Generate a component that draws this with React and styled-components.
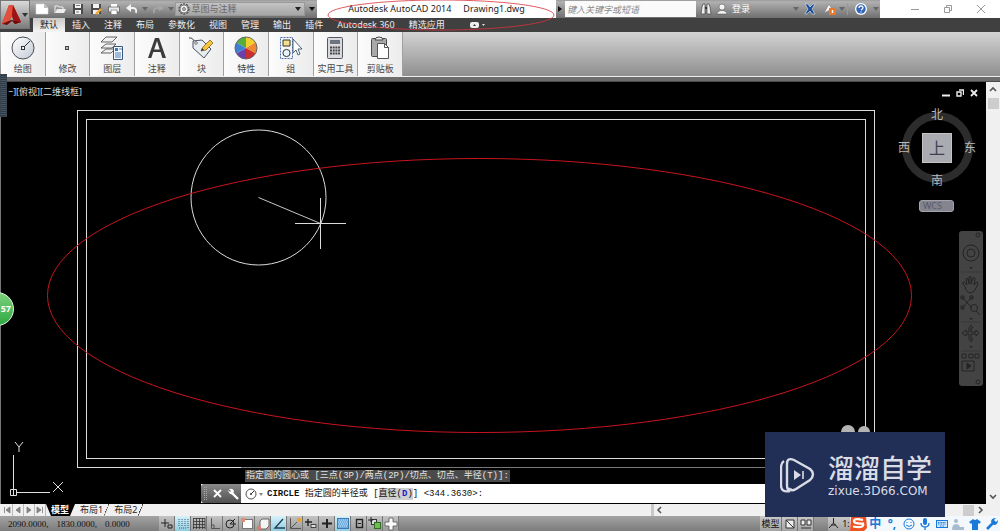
import React from "react";
import styled, { createGlobalStyle, css } from "styled-components";

const GlobalStyle = createGlobalStyle`
  *, *::before {
    box-sizing: border-box;
  }
  body {
    margin: 0;
    background: #000;
    font-family: "Noto Sans", "Noto Sans CJK SC", sans-serif;
    font-size: 9px;
    line-height: 12px;
  }
  button, select, input {
    font: inherit;
    color: inherit;
    margin: 0;
    padding: 0;
    border: 0;
    background: none;
  }
  button {
    display: flex;
    align-items: center;
    justify-content: center;
  }
  h1, p {
    margin: 0;
    font: inherit;
  }
  svg {
    display: block;
    flex: none;
  }
`;

/* ---------- small drawings ---------- */

const Svg = ({ w = 16, h = w, children }) => (
  <svg width={w} height={h} viewBox={`0 0 ${w} ${h}`} fill="none" aria-hidden="true">
    {children}
  </svg>
);

const Caret = ({ color = "#333" }) => (
  <Svg w={6} h={4}>
    <path d="M0 0h6L3 4z" fill={color} />
  </Svg>
);

const quickIcons = {
  新建: (
    <Svg w={14} h={12}>
      <path d="M1 1h8l4 4v6H1z" fill="#fff" stroke="#ddd" strokeWidth=".6" />
      <path d="M9 1v4h4z" fill="#bbb" />
    </Svg>
  ),
  打开: (
    <Svg w={12}>
      <path d="M1 10V3h3l1 1h4v2" stroke="#eee" />
      <path d="M1 10l2-4h9l-2 4z" fill="#eee" />
    </Svg>
  ),
  保存: (
    <Svg w={12}>
      <path d="M1 1h10v10H1z" fill="#4b4b4b" />
      <path d="M3 1h6v4H3zM3 7h6v4H3z" fill="#f2f2f2" />
      <path d="M4 2.500h4M4 9h3" stroke="#777" />
    </Svg>
  ),
  另存为: (
    <Svg w={12}>
      <path d="M1 1h10v10H1z" fill="#4b4b4b" />
      <path d="M3 1h6v4H3zM3 7h6v4H3z" fill="#f2f2f2" />
      <path d="M6 11l5-5" stroke="#f0a830" strokeWidth="2.400" />
    </Svg>
  ),
  打印: (
    <Svg w={12}>
      <path d="M3 1h6v3H3z" fill="#fff" />
      <path d="M.5 4h11v5H.5z" fill="#e8e8e8" stroke="#444" strokeWidth=".6" />
      <path d="M3 7h6v4.500H3z" fill="#fff" stroke="#666" strokeWidth=".6" />
    </Svg>
  ),
  放弃: (
    <Svg w={12}>
      <path d="M3 5h4q4 0 3 5" stroke="#f4f4f4" strokeWidth="1.800" />
      <path d="M0 5l5-4v8z" fill="#f4f4f4" />
    </Svg>
  ),
};

const RedoIcon = () => (
  <Svg w={12}>
    <path d="M9 5H5Q1 5 2 10" stroke="#a8a8a8" strokeWidth="1.600" />
    <path d="M12 5L7 2v6z" fill="#a8a8a8" />
  </Svg>
);

const GearIcon = () => (
  <Svg w={12}>
    <circle cx="6" cy="6" r="5" stroke="#555" strokeWidth="1.400" strokeDasharray="2 1.140" />
    <circle cx="6" cy="6" r="4" fill="#eee" stroke="#666" strokeWidth=".8" />
    <circle cx="6" cy="6" r="1.500" fill="#bbb" stroke="#666" strokeWidth=".8" />
  </Svg>
);

const ribbonPanels = [
  {
    name: "绘图",
    icon: (
      <Svg w={26}>
        <defs>
          <linearGradient id="disc" x1="0" y1="0" x2="1" y2="1">
            <stop stopColor="#fff" />
            <stop offset="1" stopColor="#c3cad6" />
          </linearGradient>
        </defs>
        <circle cx="13" cy="13" r="11" fill="url(#disc)" stroke="#4a4d52" />
        <path d="M14 12l6-6" stroke="#333" />
        <rect x="11.500" y="11.500" width="3" height="3" fill="#eef" stroke="#333" />
      </Svg>
    ),
  },
  {
    name: "修改",
    icon: (
      <Svg w={26}>
        <rect x="11.500" y="11.500" width="3" height="3" fill="#bbb" stroke="#444" />
      </Svg>
    ),
  },
  {
    name: "图层",
    icon: (
      <Svg w={26}>
        <path d="M2 18l5-4h9l-4 4zM2 13l5-4h10l-4 4zM2 7l5-5h11l-5 5z" fill="#f1f1f1" stroke="#555" strokeWidth=".9" />
        <path d="M14.500 11.500h9v13h-9z" fill="#f2f7fd" stroke="#39577c" />
        <path d="M16 13h3v3h-3z" fill="#3f78b8" />
        <path d="M20 14h3M16 18h6M16 20h6M16 22h6" stroke="#4f7eb1" />
      </Svg>
    ),
  },
  {
    name: "注释",
    icon: (
      <Svg w={26}>
        <path d="M4 23L11 3h4l7 20h-3.600l-1.900-6h-7.200l-2 6zM10.200 14.500h5.500L13 6z" fill="#3b3b3b" fillRule="evenodd" />
      </Svg>
    ),
  },
  {
    name: "块",
    icon: (
      <Svg w={26}>
        <path d="M1 3q4-1 6 5" stroke="#444" />
        <path d="M5 6l9-1 9 9-7 9L5 13z" fill="#e7ebf2" stroke="#4a5160" />
        <circle cx="8" cy="8" r="1.300" fill="#fff" stroke="#444" strokeWidth=".7" />
        <path d="M13 16l2-4 7-7 3 3-7 7z" fill="#f6c53b" stroke="#83601c" strokeWidth=".8" />
        <path d="M13 16l1-3 2 2z" fill="#333" />
      </Svg>
    ),
  },
  {
    name: "特性",
    icon: (
      <Svg w={26}>
        <path d="M13 13V2a11 11 0 0 1 9.500 5.500z" fill="#f2d02c" />
        <path d="M13 13l9.500-5.500a11 11 0 0 1 0 11z" fill="#ef8630" />
        <path d="M13 13l9.500 5.500A11 11 0 0 1 13 24z" fill="#c7302c" />
        <path d="M13 13v11a11 11 0 0 1-9.500-5.500z" fill="#6b3fae" />
        <path d="M13 13l-9.500 5.500a11 11 0 0 1 0-11z" fill="#3f7fd0" />
        <path d="M13 13L3.500 7.500A11 11 0 0 1 13 2z" fill="#58ad3e" />
        <circle cx="13" cy="13" r="11" stroke="#5c5c66" strokeWidth=".9" />
      </Svg>
    ),
  },
  {
    name: "组",
    icon: (
      <Svg w={26}>
        <path d="M2.500 2.500h12v21h-12z" stroke="#4b6fb0" strokeDasharray="2 1" />
        <path d="M5 5h7v6H5z" fill="#f2e08a" stroke="#333" />
        <circle cx="8.500" cy="18" r="3.600" fill="#e6f1fb" stroke="#333" />
        <path d="M15 4v14l3-3 2 5 2-1-2-5h4z" fill="#fff" stroke="#3c5666" strokeWidth=".9" />
      </Svg>
    ),
  },
  {
    name: "实用工具",
    icon: (
      <Svg w={26}>
        <rect x="5.500" y="2.500" width="15" height="21" rx="1" fill="#d8dade" stroke="#55585e" />
        <path d="M8 5h10v4H8z" fill="#6c7480" />
        <path d="M8 12.500h10M8 15.500h10M8 18.500h10" stroke="#444" strokeWidth="2" strokeDasharray="2 .7" />
      </Svg>
    ),
  },
  {
    name: "剪贴板",
    icon: (
      <Svg w={26}>
        <rect x="4.500" y="3.500" width="15" height="18" rx="1" fill="#a9a9a9" stroke="#4b4b4b" />
        <path d="M8 5q0-3 4-3t4 3z" fill="#eee" stroke="#444" />
        <path d="M10.500 8.500h7l4 4v11h-11z" fill="#fdfdfd" stroke="#555" />
        <path d="M17.500 8.500v4h4" stroke="#555" />
      </Svg>
    ),
  },
];

const dark = "#222";
const toggles = [
  { name: "推断约束", icon: <path d="M5 2v8M1 6h8M8 8h4v3H8z" stroke={dark} /> },
  { name: "捕捉模式", on: true, icon: <path d="M3 2v8M6 2v8M9 2v8M3 11h8M12 2v10" stroke="#345d78" strokeDasharray="1 1" /> },
  { name: "栅格显示", icon: <path d="M1 1.500h12M1 4.500h12M1 7.500h12M1 10.500h12M1.500 1v11M4.500 1v11M7.500 1v11M10.500 1v11M13 1v11" stroke="#333" strokeWidth=".8" /> },
  { name: "正交模式", icon: <path d="M3.500 1v10.500H12M3 8h3v3" stroke="#555" /> },
  { name: "极轴追踪", icon: <><circle cx="6" cy="7" r="4" stroke={dark} /><path d="M6 7l5-5M6 7h6" stroke={dark} /></> },
  { name: "对象捕捉", icon: <><rect x="2.500" y="2.500" width="10" height="9" fill="#fff" stroke="#777" /><path d="M1 1h4v4H1z" fill="#df8e74" /></> },
  { name: "三维对象捕捉", icon: <><path d="M4 4l2-2h7v7l-3 3H4z" fill="#f4f4f4" stroke="#666" /><circle cx="3" cy="11" r="2" fill="#e07b5c" /></> },
  { name: "对象捕捉追踪", on: true, icon: <path d="M11 2l-8 9h10" stroke="#1d4256" strokeWidth="1.400" /> },
  { name: "动态UCS", icon: <><path d="M2.500 1v10.500H13M3 11l6-6" stroke="#555" /><path d="M9 1h4v4H9z" fill="#e6a634" /></> },
  { name: "动态输入", icon: <><path d="M4 2v7M1 5h7" stroke={dark} strokeWidth="1.400" /><path d="M7 7.500h5v3H7z" fill="#ddd" stroke={dark} strokeWidth=".8" /></> },
  { name: "线宽", icon: <path d="M7 2v9M2 6.500h10" stroke={dark} strokeWidth="2" /> },
  { name: "透明度", on: true, icon: <><rect x="1.500" y="1.500" width="11" height="10" fill="#6eaede" stroke="#3f78ad" /><path d="M3 3h9M2 5h9M3 7h9M2 9h9" stroke="#c9e6fa" strokeDasharray="1 1" /></> },
  { name: "快捷特性", icon: <><rect x="4.500" y="2.500" width="6" height="8" stroke={dark} strokeWidth="1.400" /><path d="M6 6.500h3" stroke={dark} /></> },
  { name: "选择循环", icon: <><rect x="3.500" y="2.500" width="5" height="5" fill="#ddd" stroke="#333" /><rect x="6.500" y="5.500" width="6" height="6" fill="#6fbd4f" stroke="#2f6d25" /><path d="M3 0v5M0 3h5" stroke="#222" /></> },
  { name: "注释监视器", icon: <path d="M5 1h4v4h4v4H9v4H5V9H1V5h4z" fill="#fafafa" stroke="#555" strokeWidth=".8" /> },
];

/* ---------- page ---------- */

const Page = styled.div`
  position: relative;
`;

const Window = styled.div`
  display: flex;
  flex-direction: column;
  min-height: 100vh;
`;

const Header = styled.header`
  display: grid;
  grid-template-columns: 30px 1fr;
  background: #404040;
`;

const AppButton = styled.button`
  height: 29px;
  gap: 1px;
  border: 1px solid #777;
  background: linear-gradient(#d9d9d9, #7d7d7d);
`;

const TitleBar = styled.div`
  display: flex;
  height: 18px;
`;

const bar = css`
  display: flex;
  align-items: center;
  background: linear-gradient(#9a9a9a, #b0b0b0 10%, #6f6f6f);
`;

const QuickAccess = styled.div`
  ${bar}
  width: 287px;
  padding-left: 3px;
`;

const ToolButton = styled.button`
  width: ${(p) => p.$w || 18}px;
  height: 16px;
`;

const SelectBox = styled.label`
  display: flex;
  align-items: center;
  width: 131px;
  height: 14px;
  margin: 0 2px 0 auto;
  padding: 0 3px 0 2px;
  gap: 2px;
  color: #6a6a6a;
  border: 1px solid #999;
  background: linear-gradient(#c4c4c4, #a5a5a5);
  select {
    flex: 1;
    appearance: none;
    outline: 0;
    height: 12px;
  }
`;

const Title = styled.h1`
  position: relative;
  flex: 1;
  display: flex;
  align-items: center;
  justify-content: center;
  gap: 12px;
  white-space: nowrap;
  color: #222;
  background: #fff;
`;

const TitleRing = styled.svg`
  position: absolute;
  left: 10px;
  top: -2px;
  z-index: 2;
`;

const InfoCenter = styled.div`
  ${bar}
  width: 324px;
  color: #fff;
`;

const SearchInput = styled.input`
  width: 131px;
  height: 16px;
  padding-left: 2px;
  background: #fafafa;
  outline: 0;
  &::placeholder {
    color: #888;
    font-style: italic;
    opacity: 1;
  }
`;

const LoginButton = styled.button`
  gap: 4px;
  margin-right: auto;
`;

const Divider = styled.i`
  width: 1px;
  height: 12px;
  margin: 0 2px;
  background: #999;
`;

const WindowControls = styled.div`
  display: flex;
  align-items: center;
  justify-content: flex-end;
  width: 120px;
  padding-right: 2px;
  background: #fff;
`;

const Tabs = styled.nav`
  display: flex;
  height: 14px;
  padding-left: 3px;
`;

const Tab = styled.button`
  padding: 0 7px;
  height: 14px;
  white-space: nowrap;
  color: ${(p) => (p.$active ? "#222" : "#eee")};
  ${(p) => p.$active && "background: linear-gradient(#c9c9c9, #f5f5f5);"}
`;

const Ribbon = styled.section`
  height: 50px;
  padding-left: 1px;
  border-bottom: 1px solid #4a4a4a;
  background: linear-gradient(#d3d3d3, #8f8f8f 44px, #f0f0f0 44px, #f0f0f0 45px, #6d6d6d 45px);
`;

const PanelRow = styled.div`
  display: grid;
  grid-template-columns: repeat(9, 1fr);
  width: 402px;
`;

const PanelButton = styled.button`
  flex-direction: column;
  justify-content: flex-start;
  height: 44px;
  padding-top: 3px;
  gap: 2px;
  color: #444;
  border-right: 1px solid #a0a0a0;
  background: linear-gradient(90deg, #fcfcfc, #ececec);
  white-space: nowrap;
`;

const Workspace = styled.main`
  flex: 1;
  display: grid;
  grid-template-columns: 1fr 14px;
  min-height: 300px;
`;

const Canvas = styled.div`
  position: relative;
  display: flex;
  flex-direction: column;
  justify-content: space-between;
  border-left: 1px solid #777;
  background: #000;
`;

const Drawing = styled.svg`
  position: absolute;
  inset: 0;
  width: 100%;
  height: 100%;
`;

const ViewLabel = styled.p`
  padding: 4px 0 0 7px;
  color: #ddd;
`;

const DocumentControls = styled.div`
  position: absolute;
  right: 5px;
  top: 3px;
  display: flex;
`;

const DockHandle = styled.div`
  position: absolute;
  left: -1px;
  top: -8px;
  width: 7px;
  height: 43px;
  border: 1px solid #3a444e;
  background: repeating-linear-gradient(#2c3843, #2c3843 1px, #44586a 1px, #44586a 2px);
`;

const Badge = styled.div`
  position: absolute;
  left: -21px;
  top: 210px;
  width: 34px;
  height: 34px;
  padding-right: 2px;
  border: 1px solid #e6f5e6;
  border-radius: 50%;
  color: #fff;
  font-weight: bold;
  line-height: 32px;
  text-align: right;
  background: linear-gradient(#7ed27c, #2fa843);
`;

const ViewCube = styled.div`
  position: absolute;
  right: 9px;
  top: 26px;
  display: grid;
  grid-template-columns: 14px 52px 14px;
  grid-template-rows: 14px 52px 14px;
  place-items: center;
  color: #b8b8b8;
  font-size: 12px;
  &::before {
    content: "";
    position: absolute;
    left: 5px;
    top: 4px;
    width: 71px;
    height: 71px;
    border: 8px solid #2c2c2c;
    border-radius: 50%;
  }
  span, button {
    position: relative;
  }
`;

const CubeFace = styled.button`
  width: 30px;
  height: 30px;
  font-size: 16px;
  color: #3b4150;
  border: 1px solid #c4c4c4;
  background: #a9abb0;
`;

const WcsButton = styled.button`
  position: absolute;
  right: 32px;
  top: 118px;
  width: 35px;
  height: 12px;
  padding-left: 3px;
  justify-content: flex-start;
  border: 1px solid #a3a3ad;
  border-radius: 3px;
  color: #5a5a66;
  background: #84848f;
`;

const NavBar = styled.div`
  position: absolute;
  right: 3px;
  top: 149px;
  width: 24px;
  border-radius: 3px;
  background: #434343;
`;

const UcsIcon = styled.svg`
  position: absolute;
  left: 7px;
  bottom: 5px;
`;

const CommandArea = styled.div`
  position: relative;
  width: 600px;
  margin-left: 200px;
  font-family: "Liberation Mono", "Noto Sans CJK SC", monospace;
  white-space: pre;
`;

const History = styled.p`
  margin-left: 40px;
  padding: 2px 0;
  border-top: 1px solid #777;
  span {
    display: inline-block;
    margin-left: 4px;
    padding: 0 1px;
    color: #e4e4e4;
    background: #4a4a4a;
  }
`;

const CommandLine = styled.label`
  display: flex;
  align-items: center;
  height: 19px;
  margin-bottom: 1px;
  color: #111;
  background: #fff;
  input {
    flex: 1;
    min-width: 0;
    outline: 0;
  }
`;

const CommandGrip = styled.div`
  display: flex;
  align-items: center;
  gap: 5px;
  width: 40px;
  height: 19px;
  padding-left: 3px;
  border-radius: 3px 0 0 3px;
  background: linear-gradient(#8a8a8a, #505050);
`;

const Option = styled.span`
  background: #cfcfcf;
  b {
    color: #1a1ad0;
  }
`;

const VScroll = styled.div`
  display: flex;
  flex-direction: column;
  align-items: center;
  justify-content: space-between;
  background: #f0f0f0;
`;

const Thumb = styled.i`
  display: block;
  width: 11px;
  height: 11px;
  background: #cdcdcd;
`;

const SheetBar = styled.div`
  display: flex;
  height: 12px;
  padding-left: 2px;
  background: #f0f0f0;
`;

const SheetNav = styled.button`
  width: 11px;
  height: 12px;
  border-right: 1px solid #bbb;
`;

const SheetTab = styled.button`
  height: 12px;
  padding: 0 6px 0 5px;
  color: ${(p) => (p.$active ? "#fff" : "#222")};
  font-weight: ${(p) => (p.$active ? "bold" : "normal")};
  background: ${(p) =>
    p.$active
      ? "#000"
      : "linear-gradient(113deg, transparent calc(100% - 5px), #333 calc(100% - 5px), #333 calc(100% - 4px), transparent calc(100% - 4px))"};
  clip-path: polygon(0 0, 100% 0, calc(100% - 5px) 100%, 5px 100%);
`;

const HScroll = styled.div`
  display: flex;
  align-items: center;
  width: 349px;
  margin-left: auto;
  padding-right: 14px;
  border-left: 3px solid #c8c8c8;
  button {
    width: 12px;
    height: 12px;
  }
  i {
    margin-left: auto;
  }
`;

const StatusBar = styled.footer`
  display: flex;
  align-items: center;
  height: 15px;
  background: linear-gradient(#a3a3a3, #7c7c7c);
`;

const Coordinates = styled.output`
  display: flex;
  gap: 8px;
  width: 159px;
  padding-left: 8px;
  color: #111;
  font-family: "Liberation Serif", serif;
`;

const Toggle = styled.button`
  width: 16px;
  height: 15px;
  border-right: 1px solid #777;
  background: ${(p) => (p.$on ? "linear-gradient(#d6f2fa, #93cbe0)" : "linear-gradient(#c3c3c3, #9a9a9a)")};
`;

const ModelTools = styled.div`
  display: flex;
  margin-left: auto;
  color: #111;
`;

const ModelButton = styled.button`
  height: 15px;
  width: ${(p) => p.$w}px;
  border-right: 1px solid #777;
  background: linear-gradient(#c9c9c9, #a3a3a3);
`;

const AnnotationScale = styled.button`
  width: 22px;
  height: 15px;
  margin-left: 14px;
  gap: 3px;
  background: linear-gradient(#c9c9c9, #a3a3a3);
`;

const InputMethod = styled.div`
  display: flex;
  width: 150px;
  height: 15px;
  color: #1a78d8;
  background: #f3f8fd;
`;

const ImeButton = styled.button`
  flex: 1;
  height: 15px;
  font-size: 12px;
  font-weight: bold;
`;

const Watermark = styled.aside`
  position: absolute;
  right: 55px;
  bottom: 14px;
  z-index: 5;
  display: flex;
  align-items: center;
  gap: 8px;
  width: 180px;
  height: 85px;
  padding-left: 15px;
  color: #d9dce6;
  background: #212e55;
  p {
    font-family: "Noto Sans CJK SC", sans-serif;
    font-size: 26px;
    font-weight: 500;
    line-height: 32px;
  }
  small {
    display: block;
    font-family: "DejaVu Sans", sans-serif;
    font-size: 12px;
    line-height: 16px;
  }
`;

const tabs = ["默认", "插入", "注释", "布局", "参数化", "视图", "管理", "输出", "插件", "Autodesk 360", "精选应用"];

const TopBar = () => (
  <Header>
    <AppButton aria-label="应用程序菜单">
      <Svg w={19} h={22}>
        <path d="M0 20L7 1h4l8 17-6 2-3-8-5 8z" fill="#c3221c" />
        <path d="M7 1h4l-1 11-5 8-5 0z" fill="#e2503c" />
        <path d="M11 1l8 17-6 2-3-8z" fill="#9d1513" />
        <path d="M0 20l9-4 10 2-6 2-3-3-5 4z" fill="#6e0c0c" />
      </Svg>
      <Caret />
    </AppButton>
    <div>
      <TitleBar>
        <QuickAccess>
          {Object.keys(quickIcons).map((name) => (
            <ToolButton key={name} aria-label={name}>
              {quickIcons[name]}
            </ToolButton>
          ))}
          <ToolButton $w={8} aria-label="放弃列表"><Caret color="#666" /></ToolButton>
          <ToolButton aria-label="重做"><RedoIcon /></ToolButton>
          <ToolButton $w={8} aria-label="重做列表"><Caret color="#666" /></ToolButton>
          <SelectBox>
            <GearIcon />
            <select aria-label="工作空间" defaultValue="草图与注释">
              <option>草图与注释</option>
            </select>
            <Caret color="#222" />
          </SelectBox>
          <ToolButton $w={10} aria-label="自定义"><Caret color="#111" /></ToolButton>
        </QuickAccess>
        <Title>
          <span>Autodesk AutoCAD 2014</span>
          <span>Drawing1.dwg</span>
          <TitleRing width="230" height="34" fill="none" stroke="#d8323c" strokeWidth=".8">
            <ellipse cx="114" cy="17" rx="113" ry="15" />
          </TitleRing>
        </Title>
        <InfoCenter>
          <ToolButton $w={9} aria-label="收拢">
            <Svg w={5} h={6}><path d="M0 0l4 3-4 3z" fill="#111" /></Svg>
          </ToolButton>
          <SearchInput aria-label="搜索" placeholder="键入关键字或短语" />
          <ToolButton $w={20} aria-label="查找">
            <Svg w={12}>
              <path d="M1 11l1-7 1-3h2v10zM7 11V1h2l1 3 1 7z" fill="#eee" stroke="#444" strokeWidth=".7" />
              <path d="M5 5h2" stroke="#333" strokeWidth="2" />
            </Svg>
          </ToolButton>
          <LoginButton>
            <Svg w={12}>
              <circle cx="6" cy="4" r="3" fill="#f4f4f4" stroke="#444" strokeWidth=".5" />
              <path d="M1 11q0-3 4-3.500h2q4 .5 4 3.500z" fill="#f4f4f4" stroke="#444" strokeWidth=".5" />
            </Svg>
            登录
          </LoginButton>
          <Caret color="#666" />
          <ToolButton $w={22} aria-label="Exchange">
            <Svg w={12}>
              <path d="M1 1h3l2 3 3-3h2L8 6l3 5H8L6 8l-3 3H1l3-5z" fill="#1d4f95" stroke="#dfe8f5" strokeWidth=".6" />
            </Svg>
          </ToolButton>
          <ToolButton aria-label="脱机">
            <Svg w={12}>
              <path d="M0 10l5-9 3 5z" fill="#f4f4f4" stroke="#777" strokeWidth=".6" />
              <path d="M5 5h7v7H5z" fill="#e8792b" />
              <path d="M8.500 7v3" stroke="#fff" strokeWidth="1.400" />
            </Svg>
          </ToolButton>
          <Caret color="#666" />
          <Divider />
          <ToolButton $w={22} aria-label="帮助">
            <Svg w={12}>
              <circle cx="6" cy="6" r="6" fill="#fff" />
              <circle cx="6" cy="6" r="4.700" fill="#2f66b8" />
              <path d="M4 5q0-2 2-2t2 1.500Q8 6 6 7M6 8.500v1" stroke="#fff" strokeWidth="1.300" />
            </Svg>
          </ToolButton>
          <ToolButton $w={8} aria-label="帮助列表"><Caret color="#666" /></ToolButton>
        </InfoCenter>
        <WindowControls>
          <ToolButton $w={34} aria-label="最小化">
            <Svg w={8}><path d="M0 4.500h8" stroke="#999" /></Svg>
          </ToolButton>
          <ToolButton $w={32} aria-label="还原">
            <Svg w={8}><path d="M.5 2.500h5v5h-5zM2.500 2V.5h5v5H6" stroke="#999" /></Svg>
          </ToolButton>
          <ToolButton $w={34} aria-label="关闭">
            <Svg w={8}><path d="M0 0l8 8M8 0L0 8" stroke="#999" /></Svg>
          </ToolButton>
        </WindowControls>
      </TitleBar>
      <Tabs>
        {tabs.map((tab, i) => (
          <Tab key={tab} $active={i === 0}>{tab}</Tab>
        ))}
        <Tab aria-label="功能区显示">
          <Svg w={26} h={8}>
            <rect x="11" y="1" width="9" height="6" rx="2" fill="#eee" />
            <path d="M14 5h3l-1.500-2z" fill="#333" />
            <path d="M23 3h3l-1.500 2z" fill="#ddd" />
          </Svg>
        </Tab>
      </Tabs>
    </div>
  </Header>
);

const Navigation = () => (
  <NavBar>
    <svg width="24" height="155" fill="none" stroke="#242424" aria-hidden="true">
      <circle cx="19" cy="4" r="2" />
      <circle cx="12" cy="22" r="8" />
      <circle cx="12" cy="22" r="4" />
      <path d="M2 41h20M2 91h20M2 120h20" stroke="#383838" />
      <path d="M10 36h4l-2 2zM10 87h4l-2 2zM10 115h4l-2 2z" fill="#242424" stroke="none" />
      <path d="M7 57l-3-4q-1-2 1-2l3 3-1-6q1-2 2 0l1 5v-7q1-1 2 0v7l2-6q2-1 2 1l-1 6 3-3q1 0 1 2l-3 6q-2 3-5 3t-5-5z" />
      <path d="M3 66l10 11M13 66L3 77M2 65h3v3H2zM11 65h3v3h-3zM2 75h3v3H2z" />
      <circle cx="15" cy="77" r="3.500" />
      <path d="M17 80l4 4" />
      <path d="M12 94l2 3h-2v4h5v-2l3 3-3 3v-2h-5v5h2l-2 3-2-3v-5H7v2l-4-3 4-3v2h3v-4z" />
      <path d="M3 123h4v4H3zM10 123h4v4h-4zM16 123h4v4h-4zM3 130h12v10H3z" />
      <path d="M8 132l4 3-4 3z" fill="#242424" />
      <circle cx="19" cy="151" r="2" />
    </svg>
  </NavBar>
);

const ModelSpace = () => (
  <Canvas>
    <Drawing fill="none" stroke="#dcdcdc" aria-hidden="true">
      <rect x="76.500" y="28.500" width="797" height="357" />
      <rect x="85.500" y="37.500" width="779" height="339" />
      <circle cx="257.500" cy="115.500" r="67.500" />
      <path d="M257.500 115.500l62 26" strokeWidth=".9" />
      <path d="M294 141.500h51M319.500 116v51" />
      <ellipse cx="478.500" cy="213.500" rx="432" ry="137" stroke="#c8141e" />
      <circle cx="847" cy="350" r="7" fill="#b4b4b4" stroke="none" />
      <circle cx="863" cy="350" r="6" fill="#b4b4b4" stroke="none" />
    </Drawing>
    <ViewLabel>−][俯视][二维线框]</ViewLabel>
    <DocumentControls>
      <ToolButton $w={14} aria-label="最小化视口">
        <Svg w={8}><path d="M0 6.500h8" stroke="#eee" strokeWidth="2" /></Svg>
      </ToolButton>
      <ToolButton $w={14} aria-label="还原视口">
        <Svg w={8}><path d="M1 3h4v4H1zM3 1h4.500v5" stroke="#eee" strokeWidth="1.400" /></Svg>
      </ToolButton>
      <ToolButton $w={14} aria-label="关闭视口">
        <Svg w={8}><path d="M1 1l6 6M7 1L1 7" stroke="#eee" strokeWidth="1.800" /></Svg>
      </ToolButton>
    </DocumentControls>
    <DockHandle />
    <Badge>57</Badge>
    <ViewCube>
      <i />
      <span>北</span>
      <i />
      <span>西</span>
      <CubeFace>上</CubeFace>
      <span>东</span>
      <i />
      <span>南</span>
    </ViewCube>
    <WcsButton>WCS</WcsButton>
    <Navigation />
    <UcsIcon width="60" height="58" fill="none" stroke="#e0e0e0" aria-hidden="true">
      <path d="M5.500 14v40M9 51.500h33M2.500 48.500h6v6h-6z" />
      <path d="M7 1l4 5 4-5M11 6v5M45 41l10 10M55 41L45 51" />
    </UcsIcon>
    <CommandArea>
      <History>
        <span>指定圆的圆心或 [三点(3P)/两点(2P)/切点、切点、半径(T)]:</span>
      </History>
      <CommandLine>
        <CommandGrip>
          <Svg w={4} h={14}><path d="M.5 0v14M2.500 0v14" stroke="#aaa" strokeDasharray="1 1" /></Svg>
          <Svg w={9}><path d="M1 1l7 7M8 1L1 8" stroke="#fff" strokeWidth="1.800" /></Svg>
          <Svg w={12}>
            <path d="M5 5l6 6" stroke="#fff" strokeWidth="2.400" />
            <path d="M1 2l2 2 1-1-2-2q4-1 5 2l-1 3q-4 1-5-4z" fill="#fff" />
          </Svg>
        </CommandGrip>
        <Svg w={26} h={14}>
          <circle cx="10" cy="7" r="5" stroke="#555" />
          <path d="M10 7l3-3" stroke="#333" />
          <circle cx="10" cy="7" r="1" fill="#333" />
          <path d="M18 6h4l-2 3z" fill="#888" />
        </Svg>
        <strong>CIRCLE</strong>
        <span> 指定圆的半径或 [</span>
        <Option>直径(<b>D</b>)</Option>
        <span>] &lt;344.3630&gt;:</span>
        <input aria-label="命令" />
      </CommandLine>
    </CommandArea>
  </Canvas>
);

const Chevron = ({ d }) => (
  <Svg w={8}>
    <path d={d} stroke="#555" strokeWidth="1.600" />
  </Svg>
);

const sheetArrows = [
  ["首页", "M1.500 1v6M7 1L3 4l4 3z"],
  ["上一页", "M6 1L2 4l4 3z"],
  ["下一页", "M2 1l4 3-4 3z"],
  ["末页", "M1 1l4 3-4 3zM6.500 1v6"],
];

const ime = [
  ["搜狗", <Svg w={17} h={15}><path d="M1 1l15-1 1 12-3 3H0z" fill="#ee5220" /><path d="M13 4q-9-2-9 1t9 2.500q2 5-10 3" stroke="#fff" strokeWidth="2.200" /></Svg>],
  ["中文", "中"],
  ["标点", "°,"],
  ["表情", <Svg w={12}><circle cx="6" cy="6" r="5" stroke="currentColor" /><path d="M4 4v1M8 4v1M3 7q3 3 6 0" stroke="currentColor" /></Svg>],
  ["语音", <Svg w={12}><rect x="4" y="0" width="4" height="7" rx="2" fill="currentColor" /><path d="M2 5q0 4 4 4t4-4M6 9v3" stroke="currentColor" strokeWidth="1.300" /></Svg>],
  ["键盘", <Svg w={12}><rect x=".5" y="2.500" width="11" height="7" fill="#cfe5fa" stroke="currentColor" /><path d="M2 4.500h8M2 6h8M4 8h4" stroke="currentColor" strokeDasharray="1 .6" /></Svg>],
  ["账号", <Svg w={12}><circle cx="4" cy="3" r="2" fill="#a9bccf" /><path d="M0 12q0-6 4-6 3 0 4 3h4v3z" fill="#a9bccf" /></Svg>],
  ["皮肤", <Svg w={12}><path d="M4 1q2 2 4 0l4 3-2 2-1-1v7H3V5L2 6 0 4z" fill="currentColor" /></Svg>],
  ["工具", <Svg w={12}><path d="M1 11l6-6" stroke="currentColor" strokeWidth="2.600" /><path d="M10 0L8 2l2 2 2-2q0 5-4 5L5 4q0-4 5-4z" fill="currentColor" /></Svg>],
];

export default function App() {
  return (
    <Page>
      <GlobalStyle />
      <Window>
        <TopBar />
        <Ribbon>
          <PanelRow>
            {ribbonPanels.map((panel) => (
              <PanelButton key={panel.name}>
                {panel.icon}
                {panel.name}
              </PanelButton>
            ))}
          </PanelRow>
        </Ribbon>
        <Workspace>
          <ModelSpace />
          <VScroll>
            <div>
              <ToolButton $w={11} aria-label="向上"><Chevron d="M1 5l3-3 3 3" /></ToolButton>
              <Thumb />
            </div>
            <ToolButton $w={11} aria-label="向下"><Chevron d="M1 3l3 3 3-3" /></ToolButton>
          </VScroll>
        </Workspace>
        <SheetBar>
          {sheetArrows.map(([name, d]) => (
            <SheetNav key={name} aria-label={name}>
              <Svg w={8}><path d={d} fill="#888" stroke="#777" strokeWidth=".8" /></Svg>
            </SheetNav>
          ))}
          <SheetTab $active>模型</SheetTab>
          <SheetTab>布局1</SheetTab>
          <SheetTab>布局2</SheetTab>
          <HScroll>
            <button aria-label="向左"><Chevron d="M5 1L2 4l3 3" /></button>
            <Thumb />
            <button aria-label="向右"><Chevron d="M3 1l3 3-3 3" /></button>
          </HScroll>
        </SheetBar>
        <StatusBar>
          <Coordinates>
            <span>2090.0000,</span>
            <span>1830.0000,</span>
            <span>0.0000</span>
          </Coordinates>
          {toggles.map((t) => (
            <Toggle key={t.name} $on={t.on} aria-label={t.name}>
              <Svg w={14}>{t.icon}</Svg>
            </Toggle>
          ))}
          <ModelTools>
            <ModelButton $w={22}>模型</ModelButton>
            <ModelButton $w={16} aria-label="快速查看布局">
              <Svg w={12}><path d="M2 2h8v8H2z" fill="#eee" stroke="#333" /><path d="M2 2l8 8" stroke="#333" /></Svg>
            </ModelButton>
            <ModelButton $w={16} aria-label="快速查看图形">
              <Svg w={12}><path d="M1 2h4v5H1zM7 2h4v5H7z" fill="#eee" stroke="#333" /><path d="M1 10h10" stroke="#333" /></Svg>
            </ModelButton>
            <AnnotationScale>
              <Svg w={11}><path d="M5.500 0v5L1 10M5.500 5l4.500 5M3 7h5" stroke="#222" /></Svg>
              1:
            </AnnotationScale>
          </ModelTools>
          <InputMethod>
            {ime.map(([name, icon]) => (
              <ImeButton key={name} aria-label={name}>{icon}</ImeButton>
            ))}
          </InputMethod>
        </StatusBar>
      </Window>
      <Watermark>
        <Svg w={40} h={36}>
          <path d="M12 32q-5 3-5-3V7q0-7 7-4l16 9q6 5 0 11L16 32q-5 3-8-1" stroke="#d9dce6" strokeWidth="2.400" />
          <path d="M4 4Q1 6 1 11v17q0 8 9 6" stroke="#d9dce6" strokeWidth="2.400" />
          <path d="M14 13l7 5-7 5z" fill="#d9dce6" />
          <path d="M23 14v8" stroke="#d9dce6" strokeWidth="1.600" />
        </Svg>
        <div>
          <p>溜溜自学</p>
          <small>zixue.3D66.COM</small>
        </div>
      </Watermark>
    </Page>
  );
}
